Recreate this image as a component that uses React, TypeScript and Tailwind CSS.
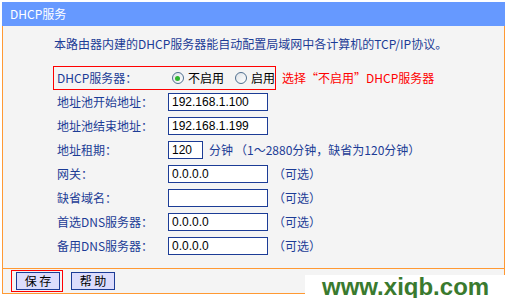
import React from 'react';

const cjk = "font-['Noto_Sans_CJK_SC',sans-serif]";
const latin = "font-['Liberation_Sans',Arial,sans-serif]";

const rows = [
  { label: '地址池开始地址：', value: '192.168.1.100', w: 'w-[100px]' },
  { label: '地址池结束地址：', value: '192.168.1.199', w: 'w-[100px]' },
  { label: '地址租期：', value: '120', w: 'w-[35px]', lease: true },
  { label: '网关：', value: '0.0.0.0', w: 'w-[100px]', optional: true },
  { label: '缺省域名：', value: '', w: 'w-[100px]', optional: true },
  { label: '首选DNS服务器：', value: '0.0.0.0', w: 'w-[100px]', optional: true },
  { label: '备用DNS服务器：', value: '0.0.0.0', w: 'w-[100px]', optional: true },
];

function Radio({ checked }: { checked?: boolean }) {
  return (
    <span className="flex h-[12px] w-[12px] items-center justify-center rounded-full border border-[#4f6f8f] bg-gradient-to-br from-[#dfe3e8] to-white">
      {checked && <span className="h-[5px] w-[5px] rounded-full bg-[#2fb52f]" />}
    </span>
  );
}

export default function App() {
  return (
    <div className={`relative h-[298px] w-[507px] overflow-hidden bg-white text-[12px] ${cjk}`}>
      <div className="ml-[2px] mt-[2px] w-[503px]">
        {/* title bar */}
        <div className="flex h-[24px] items-center bg-[#6699ff] pl-[8px] text-white">DHCP服务</div>

        {/* form body */}
        <div className="border-x border-[#ff9933] bg-[#f4f4f4] pb-[10px] pl-[50px] pt-[9px] text-[#1c3c96]">
          <p className="ml-[1px] h-[18px] leading-[18px]">
            本路由器内建的DHCP服务器能自动配置局域网中各计算机的TCP/IP协议。
          </p>

          <div className="mt-[13px] flex h-[24px] items-center">
            <div className="flex h-[24px] w-[223px] items-center border border-[#ff0000]">
              <span className="w-[114px] pl-[3px]">DHCP服务器：</span>
              <label className="ml-[4px] flex items-center gap-[4px] text-black">
                <Radio checked />
                不启用
              </label>
              <label className="ml-[11px] flex items-center gap-[4px] text-black">
                <Radio />
                启用
              </label>
            </div>
            <span className="ml-[6px] text-[#ff0000]">选择“不启用”DHCP服务器</span>
          </div>

          {rows.map((r) => (
            <div key={r.label} className="flex h-[24px] items-center">
              <span className="w-[115px] pl-[4px]">{r.label}</span>
              <div
                className={`flex h-[18px] items-center border border-[#1c3c96] bg-white pl-[3px] text-black ${latin} ${r.w}`}
              >
                {r.value}
              </div>
              {r.lease && (
                <>
                  <span className="ml-[6px]">分钟</span>
                  <span className="ml-[2px]">（1～2880分钟，缺省为120分钟）</span>
                </>
              )}
              {r.optional && <span className="ml-[5px]">（可选）</span>}
            </div>
          ))}
        </div>

        {/* button bar */}
        <div className="flex h-[26px] items-center border-x border-b border-t border-[#ff9933] bg-[#f4f4f4] pl-[8px]">
          <div className="flex h-[22px] w-[52px] items-center border border-[#ff0000] pl-[4px]">
            <button className="h-[18px] w-[44px] border border-[#1c3c96] bg-[#dcdcfc] leading-[16px] text-black">
              保 存
            </button>
          </div>
          <button className="ml-[8px] h-[18px] w-[44px] border border-[#1c3c96] bg-[#dcdcfc] leading-[16px] text-black">
            帮 助
          </button>
        </div>
      </div>

      {/* watermark */}
      <div
        className={`absolute left-[305px] top-[275px] flex h-[23px] w-[200px] items-center bg-white pl-[17px] text-[24px] font-bold leading-none text-[#3a7a2e] ${latin}`}
      >
        www.xiqb.com
      </div>
    </div>
  );
}
